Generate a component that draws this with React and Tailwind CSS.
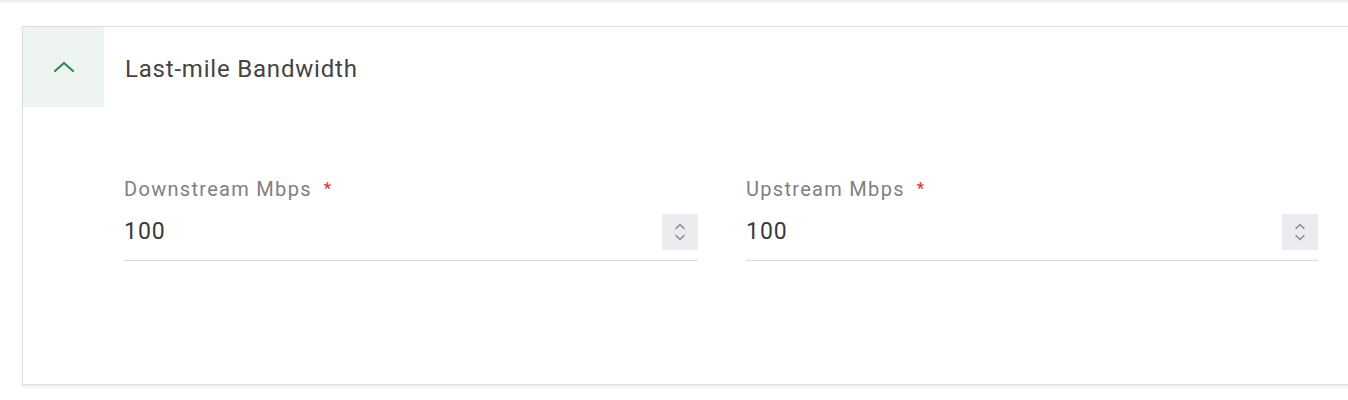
import React from 'react';

const Spinner = () => (
  <div className="w-[36px] h-[36px] bg-[#ebebf0] flex items-center justify-center shrink-0">
    <svg width="14" height="22" viewBox="0 0 14 22" fill="none" stroke="#8d8d99" strokeWidth="1.6" strokeLinecap="round" strokeLinejoin="round">
      <path d="M3 7.5 L7 3.5 L11 7.5" />
      <path d="M3 14.5 L7 18.5 L11 14.5" />
    </svg>
  </div>
);

const NumberField = ({ label, value }) => (
  <div className="flex flex-col">
    <div className="flex items-start text-[20px] tracking-[1.3px] text-[#808080] leading-[22px]">
      <span>{label}</span>
      <span className="ml-[12px] text-[#e53935] text-[16px] font-bold">*</span>
    </div>
    <div className="flex items-center justify-between mt-[14px] border-b border-[#dcdcdc] pb-[10px]">
      <span className="text-[23px] tracking-[1px] text-[#3a3a3a] leading-[26px]">{value}</span>
      <Spinner />
    </div>
  </div>
);

export default function App() {
  return (
    <div className="w-[1348px] h-[400px] bg-white overflow-hidden" style={{ fontFamily: 'Roboto, "Noto Sans", sans-serif' }}>
      {/* trailing shadow of the card above */}
      <div className="h-[4px] bg-gradient-to-b from-[#ececec] to-white" />
      <div className="ml-[22px] mt-[22px] w-[1360px] h-[359px] border border-[#dedede] bg-white shadow-[0_2px_3px_rgba(0,0,0,0.08)]">
        <div className="flex items-center h-[80px]">
          <div className="w-[81px] h-full bg-[#eef5f1] flex items-center justify-center">
            <svg width="24" height="14" viewBox="0 0 24 14" fill="none" stroke="#2e8b57" strokeWidth="2.2" strokeLinecap="round" strokeLinejoin="round">
              <path d="M3 11 L12 3 L21 11" />
            </svg>
          </div>
          <span className="ml-[21px] mt-[4px] text-[24px] text-[#444] tracking-[0.8px]">Last-mile Bandwidth</span>
        </div>
        <div className="pl-[101px] pt-[71px] grid grid-cols-[574px_572px] gap-x-[48px]">
          <NumberField label="Downstream Mbps" value="100" />
          <NumberField label="Upstream Mbps" value="100" />
        </div>
      </div>
    </div>
  );
}
